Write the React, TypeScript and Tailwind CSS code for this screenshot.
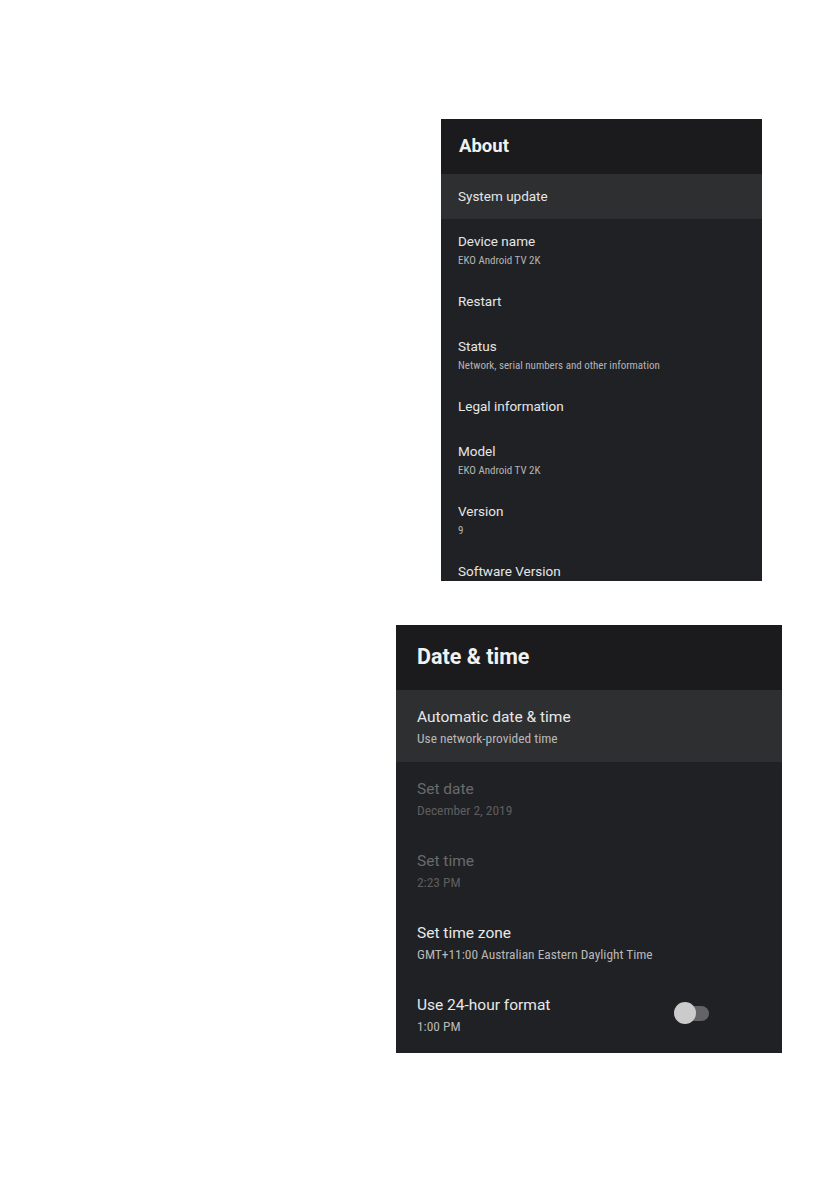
import React from 'react';

interface Item {
  title: string;
  sub?: string;
  active?: boolean;
  disabled?: boolean;
  toggle?: boolean;
}

const aboutItems: Item[] = [
  { title: 'System update', active: true },
  { title: 'Device name', sub: 'EKO Android TV 2K' },
  { title: 'Restart' },
  { title: 'Status', sub: 'Network, serial numbers and other information' },
  { title: 'Legal information' },
  { title: 'Model', sub: 'EKO Android TV 2K' },
  { title: 'Version', sub: '9' },
  { title: 'Software Version' },
];

const dateItems: Item[] = [
  { title: 'Automatic date & time', sub: 'Use network-provided time', active: true },
  { title: 'Set date', sub: 'December 2, 2019', disabled: true },
  { title: 'Set time', sub: '2:23 PM', disabled: true },
  { title: 'Set time zone', sub: 'GMT+11:00 Australian Eastern Daylight Time' },
  { title: 'Use 24-hour format', sub: '1:00 PM', toggle: true },
];

const font = { fontFamily: 'Roboto, "Noto Sans", sans-serif' };
const condensed = 'font-["Roboto_Condensed",Roboto,sans-serif] font-stretch-condensed';

const AboutPanel: React.FC = () => (
  <div className="ml-[441px] w-[321px] h-[462px] overflow-hidden bg-[#202124]">
    <div className="h-[55px] bg-[#1b1b1d] pl-[18px] flex items-center">
      <h2 className="text-[18.5px] font-bold text-[#f1f1f1]">About</h2>
    </div>
    {aboutItems.map((it) => (
      <div
        key={it.title}
        className={`pl-[17px] pt-[12px] ${it.sub ? 'pb-[10px]' : 'pb-[12px]'} ${it.active ? 'bg-[#2e2f31]' : ''}`}
      >
        <div className="text-[13.5px] leading-[21px] text-[#e6e6e6]">{it.title}</div>
        {it.sub && (
          <div className={`text-[11px] leading-[17px] text-[#b4b4b4] ${condensed}`}>{it.sub}</div>
        )}
      </div>
    ))}
  </div>
);

const Toggle: React.FC = () => (
  <div className="relative w-[36px] h-[22px] mr-[72px] mt-[8px]">
    <div className="absolute left-[10px] top-[4px] w-[25px] h-[15px] rounded-full bg-[#646466]" />
    <div className="absolute left-0 top-0 w-[22px] h-[22px] rounded-full bg-[#cbcbcb]" />
  </div>
);

const DatePanel: React.FC = () => (
  <div className="ml-[396px] w-[386px] h-[428px] overflow-hidden bg-[#202124]">
    <div className="h-[65px] bg-[#1b1b1d] pl-[21px] flex items-center">
      <h2 className="text-[21.5px] font-bold text-[#f1f1f1]">Date &amp; time</h2>
    </div>
    {dateItems.map((it) => (
      <div
        key={it.title}
        className={`h-[72px] pl-[21px] pt-[16px] flex items-start ${it.active ? 'bg-[#2e2f31]' : ''}`}
      >
        <div className="flex-1">
          <div className={`text-[15.5px] leading-[22px] ${it.disabled ? 'text-[#6a6a6c]' : 'text-[#e8e8e8]'}`}>
            {it.title}
          </div>
          <div className={`text-[13.4px] leading-[21px] ${condensed} ${it.disabled ? 'text-[#5e5e60]' : 'text-[#b8b8b8]'}`}>
            {it.sub}
          </div>
        </div>
        {it.toggle && <Toggle />}
      </div>
    ))}
  </div>
);

export default function App() {
  return (
    <div className="min-h-[1191px] w-[839px] bg-white pt-[119px]" style={font}>
      <AboutPanel />
      <div className="h-[44px]" />
      <DatePanel />
    </div>
  );
}
